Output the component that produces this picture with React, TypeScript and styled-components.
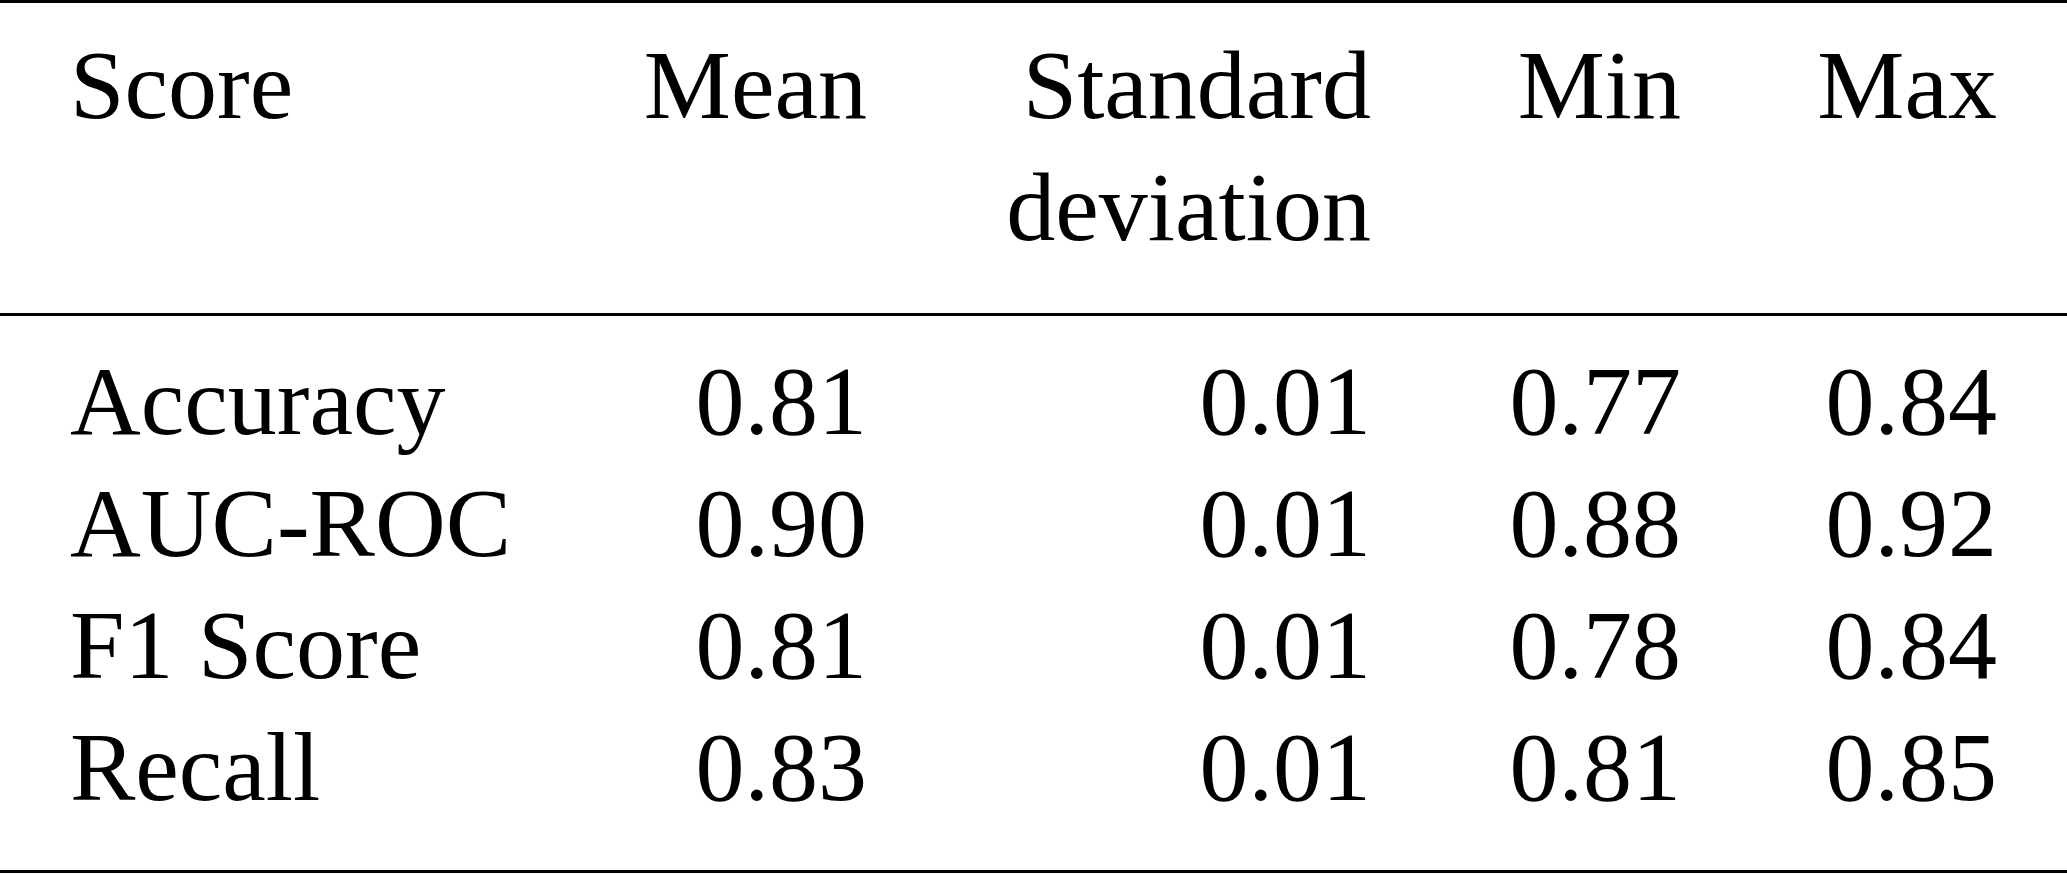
import { createGlobalStyle, styled } from 'styled-components';

const GlobalStyle = createGlobalStyle`
  html, body {
    margin: 0;
    padding: 0;
    background: #ffffff;
  }
`;

const Table = styled.div`
  width: 2067px;
  font-family: "Liberation Serif", "Times New Roman", serif;
  font-size: 98px;
  line-height: 122px;
  color: #000000;
  border-top: 3px solid #000000;
  border-bottom: 3px solid #000000;
`;

const Row = styled.div`
  display: grid;
  grid-template-columns: 490px 307px 504px 310px 316px;
  padding: 0 70px;
`;

const Head = styled.div`
  padding: 21px 0 45px;
  border-bottom: 3px solid #000000;
`;

const Body = styled.div`
  padding: 24px 0 42px;
`;

const Cell = styled.div<{ $left?: boolean }>`
  text-align: ${(p) => (p.$left ? 'left' : 'right')};
  white-space: nowrap;
`;

const rows = [
  ['Accuracy', '0.81', '0.01', '0.77', '0.84'],
  ['AUC-ROC', '0.90', '0.01', '0.88', '0.92'],
  ['F1 Score', '0.81', '0.01', '0.78', '0.84'],
  ['Recall', '0.83', '0.01', '0.81', '0.85'],
];

export default function App() {
  return (
    <>
      <GlobalStyle />
      <Table>
        <Head>
          <Row>
            <Cell $left>Score</Cell>
            <Cell>Mean</Cell>
            <Cell>
              Standard
              <br />
              deviation
            </Cell>
            <Cell>Min</Cell>
            <Cell>Max</Cell>
          </Row>
        </Head>
        <Body>
          {rows.map((r) => (
            <Row key={r[0]}>
              {r.map((v, i) => (
                <Cell key={i} $left={i === 0}>
                  {v}
                </Cell>
              ))}
            </Row>
          ))}
        </Body>
      </Table>
    </>
  );
}
